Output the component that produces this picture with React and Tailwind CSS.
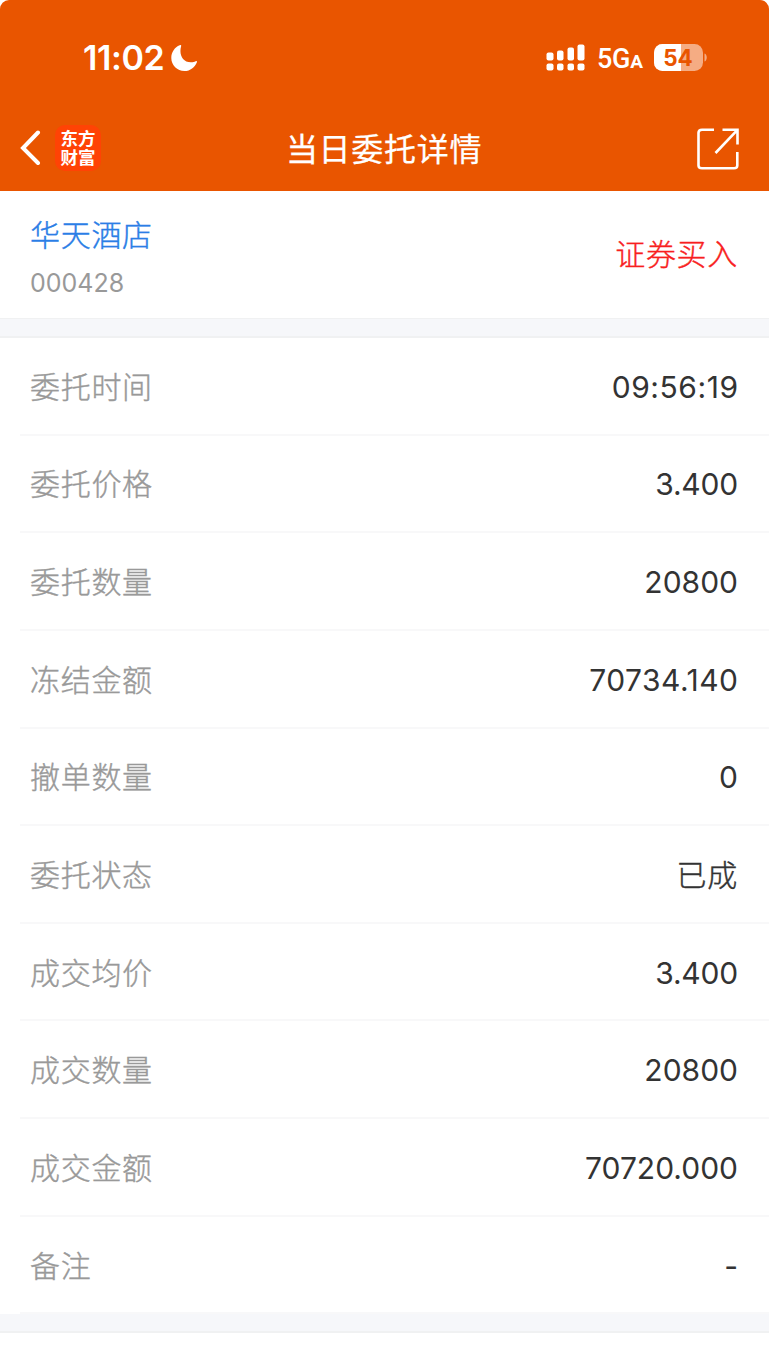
const rows = [
  { label: "委托时间", value: "09:56:19", spacing: "tracking-[0.550px] -mr-[0.550px]" },
  { label: "委托价格", value: "3.400", spacing: "tracking-[-0.200px]" },
  { label: "委托数量", value: "20800", spacing: "" },
  { label: "冻结金额", value: "70734.140", spacing: "tracking-[0.500px] -mr-[0.500px]" },
  { label: "撤单数量", value: "0", spacing: "" },
  { label: "委托状态", value: "已成", spacing: "font-light tracking-[0.700px] [-webkit-text-stroke:0.400px_#333]" },
  { label: "成交均价", value: "3.400", spacing: "tracking-[-0.200px]" },
  { label: "成交数量", value: "20800", spacing: "" },
  { label: "成交金额", value: "70720.000", spacing: "" },
  { label: "备注", value: "-", spacing: "" },
];

function StatusBar() {
  return (
    <div className="flex h-[116px] items-center justify-between pr-[61px] pl-[83px] text-white">
      <div className="flex items-center">
        <span className="w-[88px] text-[34px] leading-none font-semibold tracking-[-0.400px] whitespace-nowrap">11:02</span>
        <svg width="26" height="26" viewBox="0 0 26 26" fill="currentColor">
          <path d="M8.700.3C9.800-.2 10.500.3 10.100 1.300C7.800 9.500 11.500 17.600 20.300 17.300C22 17.300 23.300 16.800 24.700 16.200C25.700 15.800 26.200 16.300 25.900 17.200C23.900 22.300 19.200 26 13.500 26C6.200 26 .3 20.300.3 13C.3 7.200 3.700 2.200 8.700.3Z" />
        </svg>
      </div>
      <div className="flex items-center">
        <svg width="40" height="28" viewBox="0 0 40 28" fill="currentColor">
          <rect x="1.500" y="8.500" width="7" height="8" rx="2" />
          <rect x="12" y="6.500" width="6.500" height="10" rx="2" />
          <rect x="22.500" y="3.500" width="6.500" height="13" rx="2" />
          <rect x="32.500" y=".5" width="7" height="16" rx="2" />
          <rect x="1.500" y="19.500" width="7" height="7" rx="2" />
          <rect x="12" y="19.500" width="6.500" height="7" rx="2" />
          <rect x="22.500" y="19.500" width="6.500" height="7" rx="2" />
          <rect x="32.500" y="19.500" width="7" height="7" rx="2" />
        </svg>
        <span className="ml-[12px] flex w-[44px] items-baseline pt-[3px] font-['Roboto',sans-serif] text-[27px] leading-none font-medium tracking-[-0.300px]">
          5G<span className="text-[19px] font-bold">A</span>
        </span>
        <svg className="ml-[12px]" width="55" height="30" viewBox="0 0 55 30">
          <defs>
            <clipPath id="battery">
              <rect x="1" y="1" width="49" height="27" rx="8.500" />
            </clipPath>
          </defs>
          <g clipPath="url(#battery)">
            <rect x="0" y="1" width="50" height="27" fill="#f5ac83" />
            <rect x="0" y="1" width="28" height="27" fill="#fff" />
          </g>
          <path d="M51.500 10.500V18.500C54.500 17.500 54.500 11.500 51.500 10.500Z" fill="#f5ac83" />
          <text x="25" y="22.500" textAnchor="middle" fontSize="22.500" fontWeight="700" fill="#e95500">54</text>
        </svg>
      </div>
    </div>
  );
}

function NavBar() {
  return (
    <div className="flex h-[75px] items-start justify-between pr-[29px] pl-[20px] text-white">
      <div className="flex w-[200px] items-center pt-[9px]">
        <svg width="21" height="36" viewBox="0 0 21 36" fill="none" stroke="currentColor" strokeWidth="4" strokeLinecap="round" strokeLinejoin="miter">
          <path d="M18 2.500L3 18L18 33" />
        </svg>
        <div className="ml-[14px] h-[46px] w-[46px] rounded-[10px] bg-[#ff4305] pt-[3px] text-center font-['Noto_Sans_CJK_SC',sans-serif] text-[17.500px] leading-[19px] font-bold whitespace-pre-line">
          {"东方\n财富"}
        </div>
      </div>
      <h1 className="pt-[10px] pl-[8px] text-[32px] leading-[48px] font-normal tracking-[0.700px] whitespace-nowrap [-webkit-text-stroke:0.250px_white]">当日委托详情</h1>
      <div className="flex w-[200px] justify-end pt-[12px]">
        <svg width="43" height="43" viewBox="0 0 43 43" fill="none" stroke="currentColor" strokeWidth="2.600">
          <path d="M17 1.800H5Q1.500 1.800 1.500 4.800V37.500Q1.500 40.300 5 40.300H37Q40.300 40.300 40.300 37.500V24" />
          <path d="M25.500 1.800H40.500V16.500M40 2.300L18.500 25" />
        </svg>
      </div>
    </div>
  );
}

export default function App() {
  return (
    <main className="h-[1346px] w-full overflow-hidden bg-white font-['Inter','Noto_Sans_CJK_SC',sans-serif]">
      <header className="h-[191px] rounded-tl-[9px] rounded-tr-[9px] bg-[#e95500]">
        <StatusBar />
        <NavBar />
      </header>
      <section className="flex h-[127px] justify-between pr-[31px] pl-[30px]">
        <div>
          <div className="pt-[21px] text-[30px] leading-[46px] font-light tracking-[0.700px] text-[#2b7ee6] [-webkit-text-stroke:0.400px_#2b7ee6]">华天酒店</div>
          <div className="pt-[9px] text-[25px] leading-[32px] text-[#999]">000428</div>
        </div>
        <div className="pt-[40px] text-[30px] leading-[46px] font-light tracking-[0.700px] text-[#f81f1f] [-webkit-text-stroke:0.400px_#f81f1f]">证券买入</div>
      </section>
      <div className="h-[20px] border-t border-b-2 border-[#f0f1f2] bg-[#f6f7fa]" />
      <section className="pl-[20px]">
        {rows.map(({ label, value, spacing }) => (
          <div key={label} className="flex h-[97.650px] items-center justify-between border-b-2 border-[#f8f8f9] pt-[3px] pr-[31px] pl-[10px] text-[30px]">
            <span className="font-light tracking-[0.700px] text-[#999] [-webkit-text-stroke:0.400px_#999]">{label}</span>
            <span className={`text-[#333] ${spacing}`}>{value}</span>
          </div>
        ))}
      </section>
      <div className="h-[19px] border-b-2 border-[#f0f1f2] bg-[#f6f7fa]" />
    </main>
  );
}
